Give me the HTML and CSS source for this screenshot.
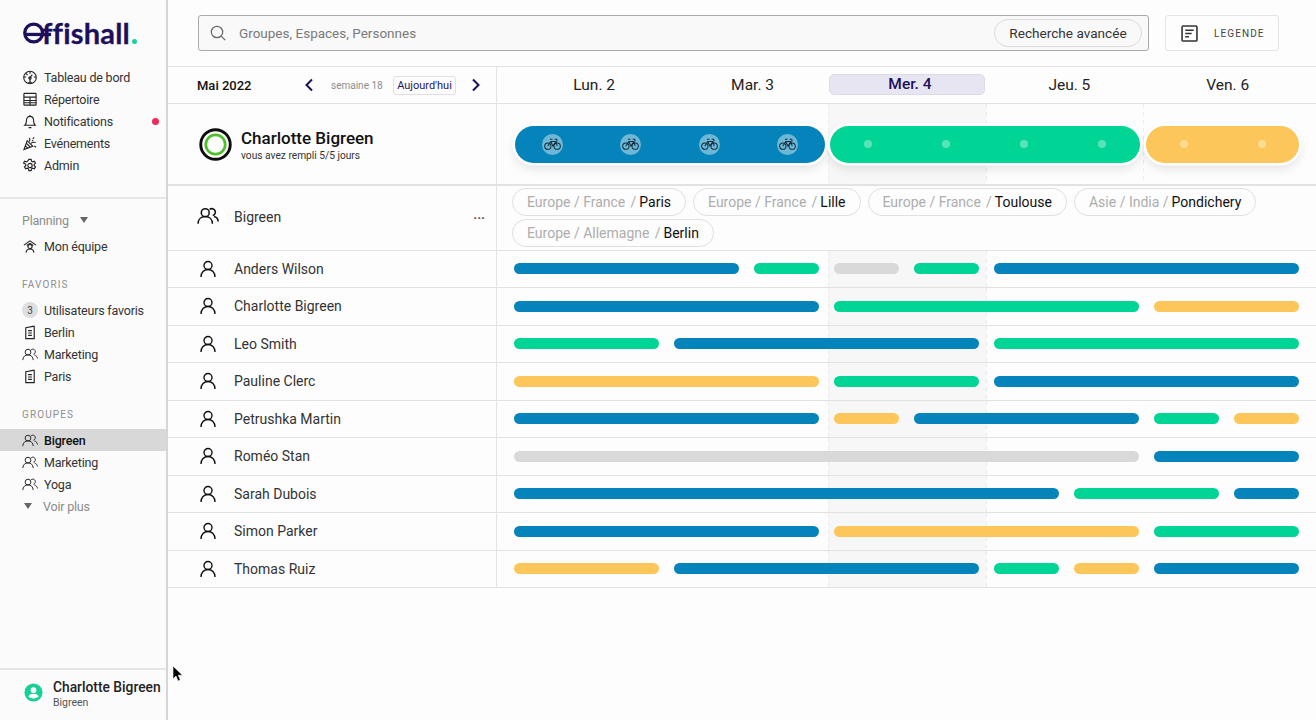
FILE: index.html
```html
<!DOCTYPE html>
<html lang="fr">
<head>
<meta charset="utf-8">
<title>Offishall</title>
<link rel="stylesheet" href="styles.css">
</head>
<body>
<svg class="defs" xmlns="http://www.w3.org/2000/svg">
  <symbol id="i-dash" viewBox="0 0 16 16"><circle cx="8" cy="8" r="6.7"/><path d="M8 1.5v2.5M1.5 7.5h2.5M12 7.5h2.5M3.5 3.5l2 2M8 8l2.5-3M8 8v5.5M6 14l2-1.5 2 1.5"/><circle cx="8" cy="8.5" r="1.2"/></symbol>
  <symbol id="i-table" viewBox="0 0 16 16"><rect x="1.5" y="1.5" width="13" height="12.500" rx=".8"/><path d="M1.500 5.500h13M1.500 9h13M1.500 11.500h13M8 5.500V14"/></symbol>
  <symbol id="i-bell" viewBox="0 0 16 16"><path d="M2.500 12c1.300-1.200 1.700-2.500 1.700-5 0-2.500 1.500-4.500 3.800-4.500s3.800 2 3.800 4.500c0 2.500.4 3.800 1.700 5zM6.500 14.500h3M8 1v1.500"/></symbol>
  <symbol id="i-party" viewBox="0 0 16 16"><path d="M1.500 14.500 5 5l6 6zM3 10.500l2.500 2.500M4 7.500l4.500 4.500"/><path d="M7 6c1-1 1-2.500.5-4M9 8c1.200-1.500 3-1.500 5-1M11 3l1.500-1.500M12.500 10.500l2 1.500M10 5l1.500-.5"/></symbol>
  <symbol id="i-gear" viewBox="0 0 16 16"><circle cx="8" cy="8" r="2.300"/><path d="M6.800 1.500h2.400l.4 1.900 1.300.7 1.800-.7 1.200 2-1.400 1.300v1.500l1.400 1.300-1.200 2-1.800-.7-1.300.7-.4 1.900H6.800l-.4-1.900-1.300-.7-1.800.7-1.200-2 1.400-1.300V6.700L1.100 5.400l1.200-2 1.800.7 1.300-.7z"/></symbol>
  <symbol id="i-team" viewBox="0 0 16 16"><circle cx="8" cy="8" r="2.200"/><path d="M3.800 14.500c.3-2.500 2-3.800 4.200-3.800s3.900 1.300 4.200 3.800M1.500 6.500 8 2l6.500 4.500M4.500 7 8 4.700 11.500 7"/></symbol>
  <symbol id="i-building" viewBox="0 0 16 16"><path d="M3.500 3 11 1.500H12.500V14.500H3.500zM6 6h4M6 8.500h4M6 11h4"/></symbol>
  <symbol id="i-users" viewBox="0 0 20 16"><circle cx="7.500" cy="5" r="3.600"/><path d="M1 15c0-4 2.800-6.500 6.500-6.500S14 11 14 15"/><path d="M11.500 2a3.200 3.200 0 1 1 2.800 5.600M15.500 8.500c2.200.6 3.700 2.500 3.800 4.500"/></symbol>
  <symbol id="i-user" viewBox="0 0 16 18"><circle cx="8" cy="5.500" r="4"/><path d="M1 17c0-4.500 3-7.500 7-7.500s7 3 7 7.500"/></symbol>
  <symbol id="i-bike" viewBox="0 0 20 16"><circle cx="4.500" cy="10.500" r="3.700"/><circle cx="15.500" cy="10.500" r="3.700"/><path d="M4.500 10.500 8 5h6l1.500 5.500M8 5l2.500 5.500L14 5M7 2.500h3M12.500 2.500h2.500L15.500 5"/></symbol>
</svg>

<div class="app">
  <aside class="sidebar">
    <div class="logo" aria-label="Offishall">
      <svg class="logo-o" viewBox="0 0 32 22" xmlns="http://www.w3.org/2000/svg"><circle cx="11" cy="11" r="9.200"/><path d="M1 12.500h28"/></svg><span class="logo-text">ffishall</span><span class="logo-dot"></span>
    </div>
    <nav class="nav nav-main">
      <a class="item"><svg class="ico"><use href="#i-dash"/></svg>Tableau de bord</a>
      <a class="item"><svg class="ico"><use href="#i-table"/></svg>Répertoire</a>
      <a class="item item-notif"><svg class="ico"><use href="#i-bell"/></svg>Notifications<span class="red-dot"></span></a>
      <a class="item"><svg class="ico"><use href="#i-party"/></svg>Evénements</a>
      <a class="item"><svg class="ico"><use href="#i-gear"/></svg>Admin</a>
    </nav>
    <div class="planning">Planning<span class="tri tri-planning"></span></div>
    <a class="item item-team"><svg class="ico"><use href="#i-team"/></svg>Mon équipe</a>
    <div class="label label-fav">FAVORIS</div>
    <a class="item"><span class="count">3</span>Utilisateurs favoris</a>
    <a class="item"><svg class="ico"><use href="#i-building"/></svg>Berlin</a>
    <a class="item"><svg class="ico"><use href="#i-users"/></svg>Marketing</a>
    <a class="item"><svg class="ico"><use href="#i-building"/></svg>Paris</a>
    <div class="label label-grp">GROUPES</div>
    <a class="item active"><svg class="ico"><use href="#i-users"/></svg>Bigreen</a>
    <a class="item"><svg class="ico"><use href="#i-users"/></svg>Marketing</a>
    <a class="item"><svg class="ico"><use href="#i-users"/></svg>Yoga</a>
    <a class="item more"><span class="tri tri-more"></span>Voir plus</a>
    <div class="foot">
      <svg class="avatar" viewBox="0 0 20 20" xmlns="http://www.w3.org/2000/svg"><circle class="av-bg" cx="10" cy="10" r="9.500"/><circle class="av-fg" cx="10" cy="7.500" r="3"/><path class="av-fg" d="M4.500 14c1-2 3-2.800 5.500-2.800s4.500.8 5.500 2.800c-1.300 1.400-3.300 2.200-5.500 2.200s-4.200-.8-5.500-2.200z"/></svg>
      <div>
        <div class="foot-name">Charlotte Bigreen</div>
        <div class="foot-sub">Bigreen</div>
      </div>
    </div>
  </aside>

  <main class="main">
    <header class="topbar">
      <div class="search">
        <svg class="search-ico" viewBox="0 0 16 16" xmlns="http://www.w3.org/2000/svg"><circle cx="7" cy="7" r="5.700"/><path d="m11.200 11.200 4 4"/></svg>
        <span class="placeholder">Groupes, Espaces, Personnes</span>
        <span class="adv">Recherche avancée</span>
      </div>
      <div class="legend">
        <svg class="legend-ico" viewBox="0 0 16 16" xmlns="http://www.w3.org/2000/svg"><rect x="1" y="1" width="14" height="14" rx="1"/><path d="M4 5h8M4 8h6M4 11h3.500"/></svg>
        <span>LEGENDE</span>
      </div>
    </header>

    <section class="row row-head">
      <div class="cell-left head-left">
        <span class="month">Mai 2022</span>
        <svg class="chev" viewBox="0 0 10 14" xmlns="http://www.w3.org/2000/svg"><path d="M8 1.500 2.500 7 8 12.500"/></svg>
        <span class="week">semaine 18</span>
        <span class="today">Aujourd'hui</span>
        <svg class="chev" viewBox="0 0 10 14" xmlns="http://www.w3.org/2000/svg"><path d="M2 1.500 7.500 7 2 12.500"/></svg>
      </div>
      <div class="days">
        <span class="day">Lun. 2</span>
        <span class="day">Mar. 3</span>
        <span class="day day-now">Mer. 4</span>
        <span class="day">Jeu. 5</span>
        <span class="day">Ven. 6</span>
      </div>
    </section>

    <section class="row row-me">
      <div class="cell-left me-left">
        <svg class="ring" viewBox="0 0 34 34" xmlns="http://www.w3.org/2000/svg"><circle class="ring-o" cx="17" cy="17" r="15.200"/><circle class="ring-i" cx="17" cy="17" r="10"/></svg>
        <div>
          <div class="me-name">Charlotte Bigreen</div>
          <div class="me-sub">vous avez rempli 5/5 jours</div>
        </div>
      </div>
      <div class="cell-right shaded shaded-me pills">
        <div class="pill blue">
          <span class="bike"><svg><use href="#i-bike"/></svg></span>
          <span class="bike"><svg><use href="#i-bike"/></svg></span>
          <span class="bike"><svg><use href="#i-bike"/></svg></span>
          <span class="bike"><svg><use href="#i-bike"/></svg></span>
        </div>
        <div class="pill green dots">
          <span class="dot"></span><span class="dot"></span><span class="dot"></span><span class="dot"></span>
        </div>
        <div class="pill yellow dots pill-short">
          <span class="dot"></span><span class="dot"></span>
        </div>
      </div>
    </section>

    <section class="row row-group">
      <div class="cell-left group-left">
        <svg class="users-big"><use href="#i-users"/></svg>
        <span class="group-name">Bigreen</span>
        <span class="more-dots">···</span>
      </div>
      <div class="chips">
        <span class="chip">Europe / France&#8201; /<b>Paris</b></span>
        <span class="chip">Europe / France&#8201; /<b>Lille</b></span>
        <span class="chip">Europe / France&#8201; /<b>Toulouse</b></span>
        <span class="chip">Asie / India /<b>Pondichery</b></span>
        <span class="chip">Europe / Allemagne&#8201; /<b>Berlin</b></span>
      </div>
    </section>

    <section class="row row-p">
      <div class="cell-left p-left"><svg class="user-ico"><use href="#i-user"/></svg>Anders Wilson</div>
      <div class="cell-right shaded bars"><i class="blue s3"></i><i class="green s1"></i><i class="gray s1"></i><i class="green s1"></i><i class="blue s4"></i></div>
    </section>
    <section class="row row-p">
      <div class="cell-left p-left"><svg class="user-ico"><use href="#i-user"/></svg>Charlotte Bigreen</div>
      <div class="cell-right shaded bars"><i class="blue s4"></i><i class="green s4"></i><i class="yellow s2"></i></div>
    </section>
    <section class="row row-p">
      <div class="cell-left p-left"><svg class="user-ico"><use href="#i-user"/></svg>Leo Smith</div>
      <div class="cell-right shaded bars"><i class="green s2"></i><i class="blue s4"></i><i class="green s4"></i></div>
    </section>
    <section class="row row-p">
      <div class="cell-left p-left"><svg class="user-ico"><use href="#i-user"/></svg>Pauline Clerc</div>
      <div class="cell-right shaded bars"><i class="yellow s4"></i><i class="green s2"></i><i class="blue s4"></i></div>
    </section>
    <section class="row row-p">
      <div class="cell-left p-left"><svg class="user-ico"><use href="#i-user"/></svg>Petrushka Martin</div>
      <div class="cell-right shaded bars"><i class="blue s4"></i><i class="yellow s1"></i><i class="blue s3"></i><i class="green s1"></i><i class="yellow s1"></i></div>
    </section>
    <section class="row row-p">
      <div class="cell-left p-left"><svg class="user-ico"><use href="#i-user"/></svg>Roméo Stan</div>
      <div class="cell-right shaded bars"><i class="gray s8"></i><i class="blue s2"></i></div>
    </section>
    <section class="row row-p">
      <div class="cell-left p-left"><svg class="user-ico"><use href="#i-user"/></svg>Sarah Dubois</div>
      <div class="cell-right shaded bars"><i class="blue s7"></i><i class="green s2"></i><i class="blue s1"></i></div>
    </section>
    <section class="row row-p">
      <div class="cell-left p-left"><svg class="user-ico"><use href="#i-user"/></svg>Simon Parker</div>
      <div class="cell-right shaded bars"><i class="blue s4"></i><i class="yellow s4"></i><i class="green s2"></i></div>
    </section>
    <section class="row row-p">
      <div class="cell-left p-left"><svg class="user-ico"><use href="#i-user"/></svg>Thomas Ruiz</div>
      <div class="cell-right shaded bars"><i class="yellow s2"></i><i class="blue s4"></i><i class="green s1"></i><i class="yellow s1"></i><i class="blue s2"></i></div>
    </section>
  </main>
</div>

<svg class="cursor" viewBox="0 0 12 18" xmlns="http://www.w3.org/2000/svg"><path d="M1 1v13l3-3 2 5 2.300-1-2-4.800H10.500z"/></svg>
</body>
</html>
```

FILE: styles.css
```css
* { box-sizing: border-box; }
html, body { margin: 0; height: 100%; }
body {
  font-family: "Roboto", "Noto Sans", sans-serif;
  color: #333;
  background: #fdfdfd;
  overflow: hidden;
}
.defs { display: none; }

.app { display: flex; height: 720px; }

/* ---------- Sidebar ---------- */
.sidebar {
  width: 168px;
  flex: none;
  display: flex;
  flex-direction: column;
  background: #fbfbfb;
  border-right: 2px solid #d6d6d6;
  font-size: 12.500px;
  letter-spacing: -.2px;
}
.logo {
  height: 66px;
  padding: 16px 0 0 23px;
  display: flex;
  align-items: flex-start;
  color: #1e0f5c;
  letter-spacing: 0;
}
.logo-o {
  width: 31px;
  height: 22px;
  margin: 6px -12px 0 0;
  fill: none;
  stroke: #1e0f5c;
  stroke-width: 3.400;
  flex: none;
}
.logo-text {
  font-family: "Lato", sans-serif;
  font-weight: 700;
  font-size: 29px;
  line-height: 33px;
  letter-spacing: .2px;
  -webkit-text-stroke: .3px #1e0f5c;
}
.logo-dot {
  width: 5px;
  height: 5px;
  border-radius: 50%;
  background: #17d29b;
  margin: 23px 0 0 2px;
}
.nav-main {
  padding-bottom: 21px;
  border-bottom: 2px solid #e6e6e6;
  margin-bottom: 10px;
}
.item {
  display: flex;
  align-items: center;
  height: 22px;
  padding-left: 22px;
  color: #333;
  white-space: nowrap;
}
.ico {
  width: 16px;
  height: 15px;
  margin-right: 6px;
  flex: none;
  fill: none;
  stroke: #222;
  stroke-width: 1.200;
}
.item-notif { position: relative; }
.red-dot {
  position: absolute;
  left: 152px;
  top: 7.500px;
  width: 7px;
  height: 7px;
  border-radius: 50%;
  background: #ee2b5b;
}
.planning {
  height: 22px;
  padding-left: 22px;
  display: flex;
  align-items: center;
  color: #8b8b8b;
}
.tri {
  width: 0;
  height: 0;
  border-left: 4.500px solid transparent;
  border-right: 4.500px solid transparent;
  border-top: 6.500px solid #666;
}
.tri-planning { margin-left: 11px; }
.item-team { margin-top: 4px; }
.label {
  height: 22px;
  padding-left: 22px;
  display: flex;
  align-items: center;
  font-size: 10px;
  letter-spacing: 1.100px;
  color: #8e8e8e;
}
.label-fav { margin: 16px 0 4px; }
.label-grp { margin: 16px 0 4px; }
.count {
  width: 16px;
  height: 16px;
  margin-right: 6px;
  border-radius: 50%;
  background: #dedede;
  font-size: 10px;
  display: flex;
  align-items: center;
  justify-content: center;
  color: #444;
  flex: none;
}
.item.active {
  background: #d8d8d8;
  font-weight: 500;
  color: #111;
}
.more { color: #8b8b8b; padding-left: 24px; }
.tri-more { margin-right: 11px; }
.foot {
  margin-top: auto;
  height: 52px;
  border-top: 2px solid #e6e6e6;
  display: flex;
  align-items: center;
  padding: 0 0 2px 24px;
  gap: 10px;
  white-space: nowrap;
  letter-spacing: 0;
}
.avatar { width: 19px; height: 19px; flex: none; margin-bottom: 4px; }
.av-bg { fill: #17cf97; }
.av-fg { fill: #fff; }
.foot-name { font-size: 13.800px; font-weight: 500; color: #222; line-height: 18px; }
.foot-sub { font-size: 10.500px; color: #555; line-height: 14px; }

/* ---------- Top bar ---------- */
.main { flex: 1; min-width: 0; }
.topbar {
  height: 67px;
  border-bottom: 1px solid #e2e2e2;
  padding: 15px 37px 0 30px;
  display: flex;
  align-items: flex-start;
  gap: 16px;
}
.search {
  flex: 1;
  height: 36px;
  border: 1px solid #a9a9a9;
  border-radius: 3px;
  background: #f9f9f9;
  display: flex;
  align-items: center;
  padding: 0 6px 0 11px;
}
.search-ico {
  width: 16px;
  height: 16px;
  fill: none;
  stroke: #666;
  stroke-width: 1.200;
  margin-right: 13px;
}
.placeholder { flex: 1; font-size: 13.500px; color: #7a7a7a; }
.adv {
  height: 28px;
  width: 148px;
  border: 1px solid #dcdcdc;
  border-radius: 14px;
  display: flex;
  align-items: center;
  justify-content: center;
  font-size: 13.600px;
  color: #333;
}
.legend {
  width: 114px;
  height: 36px;
  border: 1px solid #e4e4e4;
  border-radius: 3px;
  display: flex;
  align-items: center;
  padding-left: 15px;
  font-size: 10px;
  letter-spacing: 1.100px;
  color: #444;
}
.legend-ico {
  width: 17px;
  height: 17px;
  fill: none;
  stroke: #333;
  stroke-width: 1.500;
  margin-right: 16px;
}

/* ---------- Table ---------- */
.row {
  display: grid;
  grid-template-columns: 329px 1fr;
  border-bottom: 1px solid #e2e2e2;
}
.cell-left {
  border-right: 1px solid #e2e2e2;
  display: flex;
  align-items: center;
  min-width: 0;
}
.row-head { height: 37px; }
.row-me { height: 82px; border-bottom-width: 2px; }
.row-group { height: 64.500px; }
.row-p { height: 37.500px; }

.head-left { padding-left: 29px; }
.month { font-size: 13px; font-weight: 500; color: #111; width: 107px; flex: none; }
.chev { width: 10px; height: 14px; fill: none; stroke: #1e0f5c; stroke-width: 2; flex: none; }
.week { font-size: 10px; color: #8d8d8d; width: 51px; margin: 0 11px 0 17px; white-space: nowrap; flex: none; }
.today {
  height: 19px;
  width: 63px;
  border: 1px solid #e0e0e0;
  border-radius: 3px;
  font-size: 11px;
  color: #25175f;
  display: flex;
  align-items: center;
  justify-content: center;
  white-space: nowrap;
  margin-right: 15px;
  flex: none;
}
.days {
  display: grid;
  grid-template-columns: repeat(5, 158.400px);
  padding-left: 18px;
  align-items: center;
}
.day { text-align: center; font-size: 15.500px; color: #222; padding-bottom: 1px; }
.day-now {
  height: 21px;
  line-height: 18px;
  margin: -1px 5px 0 -3px;
  padding: 0 0 0 6px;
  background: #e8e5f2;
  border: 1px solid #dedbe9;
  border-radius: 5px;
  font-weight: 500;
  color: #1e0f5c;
}

.shaded {
  background:
    repeating-linear-gradient(180deg, #ececec 0 4px, transparent 4px 8px) 331px 0 / 1px 100% no-repeat,
    repeating-linear-gradient(180deg, #ececec 0 4px, transparent 4px 8px) 489px 0 / 1px 100% no-repeat,
    linear-gradient(#f7f7f7, #f7f7f7) 331px 0 / 158px 100% no-repeat;
}
.shaded-me {
  background:
    repeating-linear-gradient(180deg, #ececec 0 4px, transparent 4px 8px) 331px 0 / 1px 100% no-repeat,
    repeating-linear-gradient(180deg, #ececec 0 4px, transparent 4px 8px) 489px 0 / 1px 100% no-repeat,
    repeating-linear-gradient(180deg, #ececec 0 4px, transparent 4px 8px) 646px 0 / 1px 100% no-repeat,
    linear-gradient(#f7f7f7, #f7f7f7) 331px 0 / 158px 100% no-repeat;
}

.me-left { padding-left: 31px; gap: 9px; }
.ring { width: 33px; height: 33px; flex: none; fill: none; }
.ring-o { stroke: #0c0c0c; stroke-width: 3; }
.ring-i { stroke: #4cbf2a; stroke-width: 2.800; }
.me-name { font-size: 17px; font-weight: 500; color: #111; line-height: 22px; padding-top: 1px; }
.me-sub { font-size: 10.200px; color: #333; line-height: 14px; }

.pills {
  display: flex;
  align-items: center;
  gap: 5px;
  padding-left: 18px;
}
.pill {
  height: 37px;
  width: 310px;
  border-radius: 18.500px;
  display: flex;
  align-items: center;
  justify-content: space-between;
  padding: 0 27px;
  box-shadow: 0 0 0 2.500px #fff, 0 5px 12px rgba(0, 0, 0, .12);
}
.pills .dots { padding: 0 33.500px; }
.pills .pill-short { width: 153px; margin-left: 1px; }
.blue { background: #0484bb; }
.green { background: #00d596; }
.yellow { background: #fdc65a; }
.gray { background: #d9d9d9; }
.bike {
  width: 21px;
  height: 21px;
  border-radius: 50%;
  background: rgba(255, 255, 255, .42);
  display: flex;
  align-items: center;
  justify-content: center;
}
.bike svg { width: 17px; height: 14px; fill: none; stroke: #14303f; stroke-width: 1.200; }
.dot { width: 8px; height: 8px; border-radius: 50%; background: rgba(255, 255, 255, .35); }

.group-left { padding: 0 0 1px 29px; font-size: 14px; }
.users-big {
  width: 22px;
  height: 18px;
  margin: -2px 15px 0 0;
  fill: none;
  stroke: #111;
  stroke-width: 1.400;
  flex: none;
}
.group-name { flex: 1; }
.more-dots { color: #555; font-size: 13px; margin-right: 11px; font-weight: 700; }
.chips {
  display: flex;
  flex-wrap: wrap;
  align-content: flex-start;
  gap: 3px 7px;
  padding: 2px 40px 0 15px;
}
.chip {
  height: 28px;
  border: 1px solid #e0e0e0;
  border-radius: 14px;
  padding: 0 14px;
  display: flex;
  align-items: center;
  white-space: pre;
  font-size: 14px;
  color: #adadad;
}
.chip b { font-weight: 400; color: #111; margin-left: 3px; }

.p-left { padding-left: 32px; font-size: 14px; color: #333; }
.user-ico {
  width: 16px;
  height: 18px;
  margin-right: 18px;
  fill: none;
  stroke: #111;
  stroke-width: 1.400;
  flex: none;
}
.bars {
  display: grid;
  grid-template-columns: repeat(10, 65px);
  column-gap: 15px;
  align-items: center;
  padding-left: 17px;
}
.bars i { height: 11px; border-radius: 6px; display: block; }
.s1 { grid-column: span 1; }
.s2 { grid-column: span 2; }
.s3 { grid-column: span 3; }
.s4 { grid-column: span 4; }
.s7 { grid-column: span 7; }
.s8 { grid-column: span 8; }

.cursor {
  position: absolute;
  left: 172px;
  top: 665px;
  width: 12px;
  height: 18px;
  fill: #000;
  stroke: #fff;
  stroke-width: .6;
}
```
